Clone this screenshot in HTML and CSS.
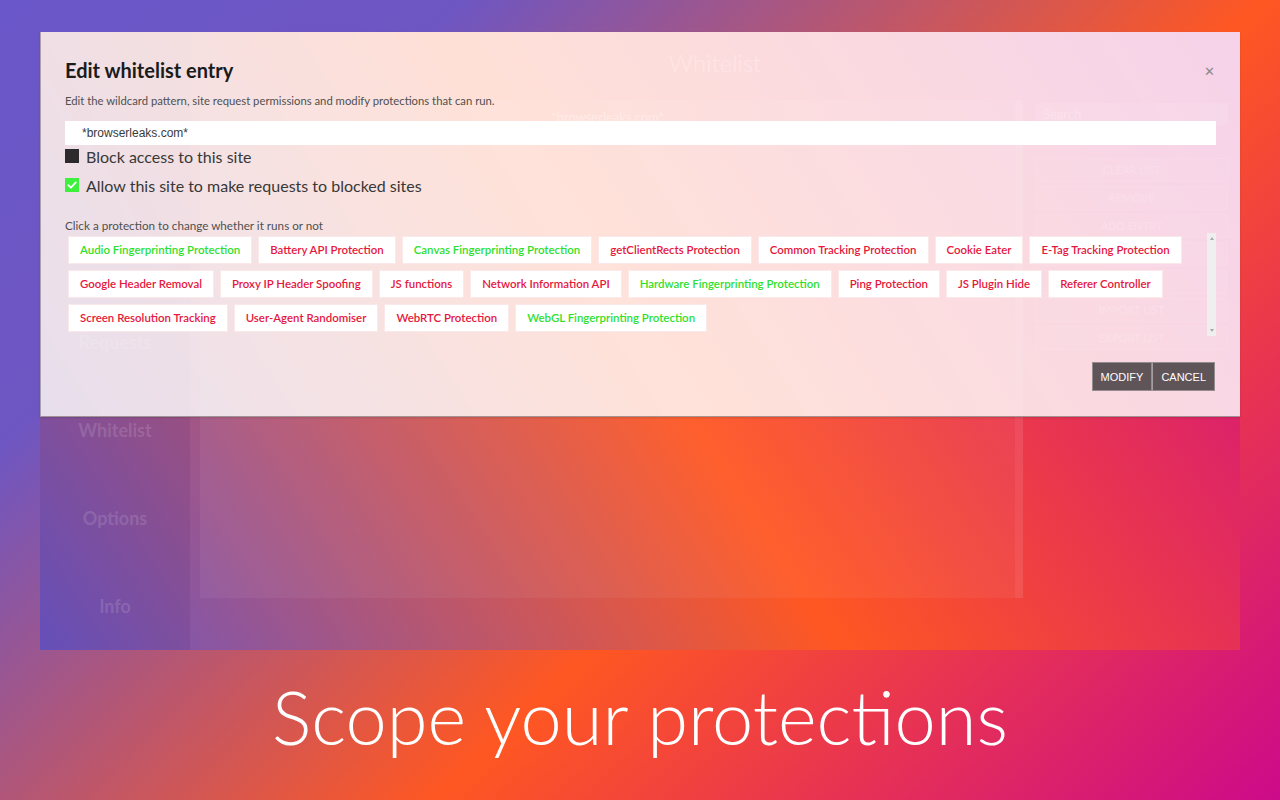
FILE: index.html
```html
<!DOCTYPE html>
<html lang="en">
<head>
<meta charset="utf-8">
<title>Scope your protections</title>
<link rel="stylesheet" href="styles.css">
</head>
<body>
<div class="stage">
  <div class="app">
    <aside class="sidebar">
      <div class="nav-item">Requests</div>
      <div class="nav-item">Whitelist</div>
      <div class="nav-item">Options</div>
      <div class="nav-item">Info</div>
    </aside>
    <main class="main">
      <h1 class="page-title">Whitelist</h1>
      <div class="workspace">
        <div class="list-panel">
          <div class="list-entry">*browserleaks.com*</div>
        </div>
        <div class="list-scroll"></div>
        <div class="side-panel">
          <div class="search">Search</div>
          <div class="side-btn">CLEAR LIST</div>
          <div class="side-btn">REMOVE</div>
          <div class="side-btn">ADD ENTRY</div>
          <div class="side-btn"></div>
          <div class="side-btn"></div>
          <div class="side-btn">IMPORT LIST</div>
          <div class="side-btn">EXPORT LIST</div>
        </div>
      </div>
    </main>

    <div class="modal">
      <div class="modal-head">
        <h2 class="modal-title">Edit whitelist entry</h2>
        <span class="close">&#x2715;</span>
      </div>
      <p class="modal-desc">Edit the wildcard pattern, site request permissions and modify protections that can run.</p>
      <input class="pattern" type="text" value="*browserleaks.com*">
      <div class="check-row"><span class="box box-off"></span><span>Block access to this site</span></div>
      <div class="check-row"><span class="box box-on"><svg viewBox="0 0 14 14" width="14" height="14"><path d="M3.3 7.2 L5.9 9.7 L10.8 4.3" fill="none" stroke="#fff" stroke-width="1.8" stroke-linecap="round" stroke-linejoin="round"/></svg></span><span>Allow this site to make requests to blocked sites</span></div>
      <p class="hint">Click a protection to change whether it runs or not</p>
      <div class="chips-area">
        <div class="chips">
          <div class="chip-row">
            <span class="chip on">Audio Fingerprinting Protection</span>
            <span class="chip off">Battery API Protection</span>
            <span class="chip on">Canvas Fingerprinting Protection</span>
            <span class="chip off">getClientRects Protection</span>
            <span class="chip off">Common Tracking Protection</span>
            <span class="chip off">Cookie Eater</span>
            <span class="chip off">E-Tag Tracking Protection</span>
          </div>
          <div class="chip-row">
            <span class="chip off">Google Header Removal</span>
            <span class="chip off">Proxy IP Header Spoofing</span>
            <span class="chip off">JS functions</span>
            <span class="chip off">Network Information API</span>
            <span class="chip on">Hardware Fingerprinting Protection</span>
            <span class="chip off">Ping Protection</span>
            <span class="chip off">JS Plugin Hide</span>
            <span class="chip off">Referer Controller</span>
          </div>
          <div class="chip-row">
            <span class="chip off">Screen Resolution Tracking</span>
            <span class="chip off">User-Agent Randomiser</span>
            <span class="chip off">WebRTC Protection</span>
            <span class="chip on">WebGL Fingerprinting Protection</span>
          </div>
        </div>
        <div class="vscroll"><span class="arrow arrow-up"></span><span class="arrow arrow-down"></span></div>
      </div>
      <div class="actions">
        <button class="btn">MODIFY</button><button class="btn">CANCEL</button>
      </div>
    </div>
  </div>
  <div class="caption">Scope your protections</div>
</div>
</body>
</html>
```

FILE: styles.css
```css
* { box-sizing: border-box; }

html, body {
  margin: 0;
  padding: 0;
}

body {
  width: 1280px;
  height: 800px;
  overflow: hidden;
  font-family: Lato, "Noto Sans", sans-serif;
  background: linear-gradient(136deg, #6a57c9 0%, #6e56c2 22%, #ff5722 60%, #cc0a8a 100%);
}

.stage {
  padding: 32px 40px 0;
}

/* ---------- app window (behind the modal) ---------- */
.app {
  position: relative;
  height: 618px;
  display: flex;
  background: linear-gradient(57deg, #6a56c4 0%, #ff5722 50%, #cc0a8a 100%);
}

.sidebar {
  width: 150px;
  background: rgba(40, 0, 70, 0.08);
  padding-top: 266px;
  display: flex;
  flex-direction: column;
}

.nav-item {
  height: 88px;
  display: flex;
  align-items: center;
  justify-content: center;
  font-weight: 700;
  font-size: 18px;
  color: rgba(255, 255, 255, 0.14);
}

.main {
  flex: 1;
  display: flex;
  flex-direction: column;
}

.page-title {
  margin: 16px 0 22px;
  height: 30px;
  line-height: 30px;
  text-align: center;
  font-size: 24px;
  font-weight: 300;
  color: rgba(255, 255, 255, 0.3);
}

.workspace {
  display: flex;
  height: 498px;
  padding-left: 10px;
}

.list-panel {
  width: 815px;
  background: rgba(255, 255, 255, 0.05);
}

.list-entry {
  padding-top: 8px;
  line-height: 18px;
  text-align: center;
  font-size: 13px;
  color: rgba(255, 255, 255, 0.35);
}

.list-scroll {
  width: 8px;
  background: rgba(255, 255, 255, 0.1);
}

.side-panel {
  margin-left: 12px;
  width: 193px;
  padding-top: 3px;
  display: flex;
  flex-direction: column;
  gap: 4px;
}

.search {
  height: 22px;
  line-height: 22px;
  padding-left: 8px;
  font-size: 13px;
  color: rgba(255, 255, 255, 0.22);
  background: rgba(255, 255, 255, 0.08);
  margin-bottom: 29px;
}

.side-btn {
  height: 24px;
  line-height: 22px;
  text-align: center;
  font-size: 11px;
  color: rgba(255, 255, 255, 0.18);
  background: rgba(255, 255, 255, 0.03);
  border: 1px solid rgba(255, 255, 255, 0.06);
}

/* ---------- modal ---------- */
.modal {
  position: absolute;
  top: 0;
  left: 0;
  right: 0;
  height: 385px;
  padding: 26px 24px 0 24px;
  background: rgba(255, 255, 255, 0.82);
  border-left: 1px solid rgba(120, 110, 120, 0.55);
  border-bottom: 1px solid rgba(110, 95, 95, 0.6);
  box-shadow: 0 1px 2px rgba(0, 0, 0, 0.12);
}

.modal-head {
  display: flex;
  align-items: center;
  justify-content: space-between;
  height: 24px;
}

.modal-title {
  margin: 0;
  font-size: 20px;
  font-weight: 700;
  color: #1b1b1b;
  line-height: 24px;
}

.close {
  font-family: "DejaVu Sans", sans-serif;
  font-size: 13px;
  font-weight: 700;
  color: #8a8a8a;
  margin-right: 1px;
  padding-top: 3px;
}

.modal-desc {
  margin: 11px 0 0;
  line-height: 16px;
  font-size: 11.3px;
  color: #505050;
}

.pattern {
  display: block;
  width: 100%;
  height: 24px;
  margin-top: 12px;
  padding: 0 0 0 17px;
  border: none;
  outline: none;
  background: #fff;
  font-family: "Liberation Sans", Arial, sans-serif;
  font-size: 12px;
  color: #3a3a3a;
}

.check-row {
  display: flex;
  align-items: center;
  gap: 7px;
  height: 22px;
  margin-top: 0;
  font-size: 16px;
  color: #383838;
}

.check-row + .check-row {
  margin-top: 7px;
}

.box {
  width: 14px;
  height: 14px;
  flex: none;
  display: block;
}

.box svg { display: block; }

.box-off { background: #2c2a2a; }
.box-on { background: #3cf03c; }

.hint {
  margin: 21px 0 0;
  line-height: 16px;
  font-size: 11.7px;
  color: #505050;
}

.chips-area {
  display: flex;
  height: 103px;
}

.chips {
  flex: 1;
  display: flex;
  flex-direction: column;
}

.chip-row {
  display: flex;
}

.chip {
  height: 28px;
  line-height: 26px;
  margin: 3px;
  padding: 0 11px;
  background: #fff;
  border: 1px solid #fbe9e9;
  font-size: 11.45px;
  font-weight: 600;
  white-space: nowrap;
}

.chip.on { color: #2ee02e; }
.chip.off { color: #e6173d; }

.vscroll {
  width: 9px;
  background: #efefef;
  display: flex;
  flex-direction: column;
  justify-content: space-between;
  align-items: center;
  padding: 4px 0;
}

.arrow {
  width: 0;
  height: 0;
  border-left: 2px solid transparent;
  border-right: 2px solid transparent;
}

.arrow-up { border-bottom: 3px solid #a8a8a8; }
.arrow-down { border-top: 3px solid #a8a8a8; }

.actions {
  display: flex;
  justify-content: flex-end;
  margin-top: 26px;
  padding-right: 1px;
}

.btn {
  height: 29px;
  padding: 0 8px;
  margin: 0;
  border: 1px solid #958b8e;
  background: #5f5458;
  color: #fff;
  font-family: "Liberation Sans", Arial, sans-serif;
  font-size: 11px;
}

.btn + .btn { border-left-color: #a59c9f; }

/* ---------- caption ---------- */
.caption {
  height: 150px;
  padding-top: 30px;
  text-align: center;
  font-size: 74px;
  line-height: 74px;
  font-weight: 300;
  color: #fff;
}
```
